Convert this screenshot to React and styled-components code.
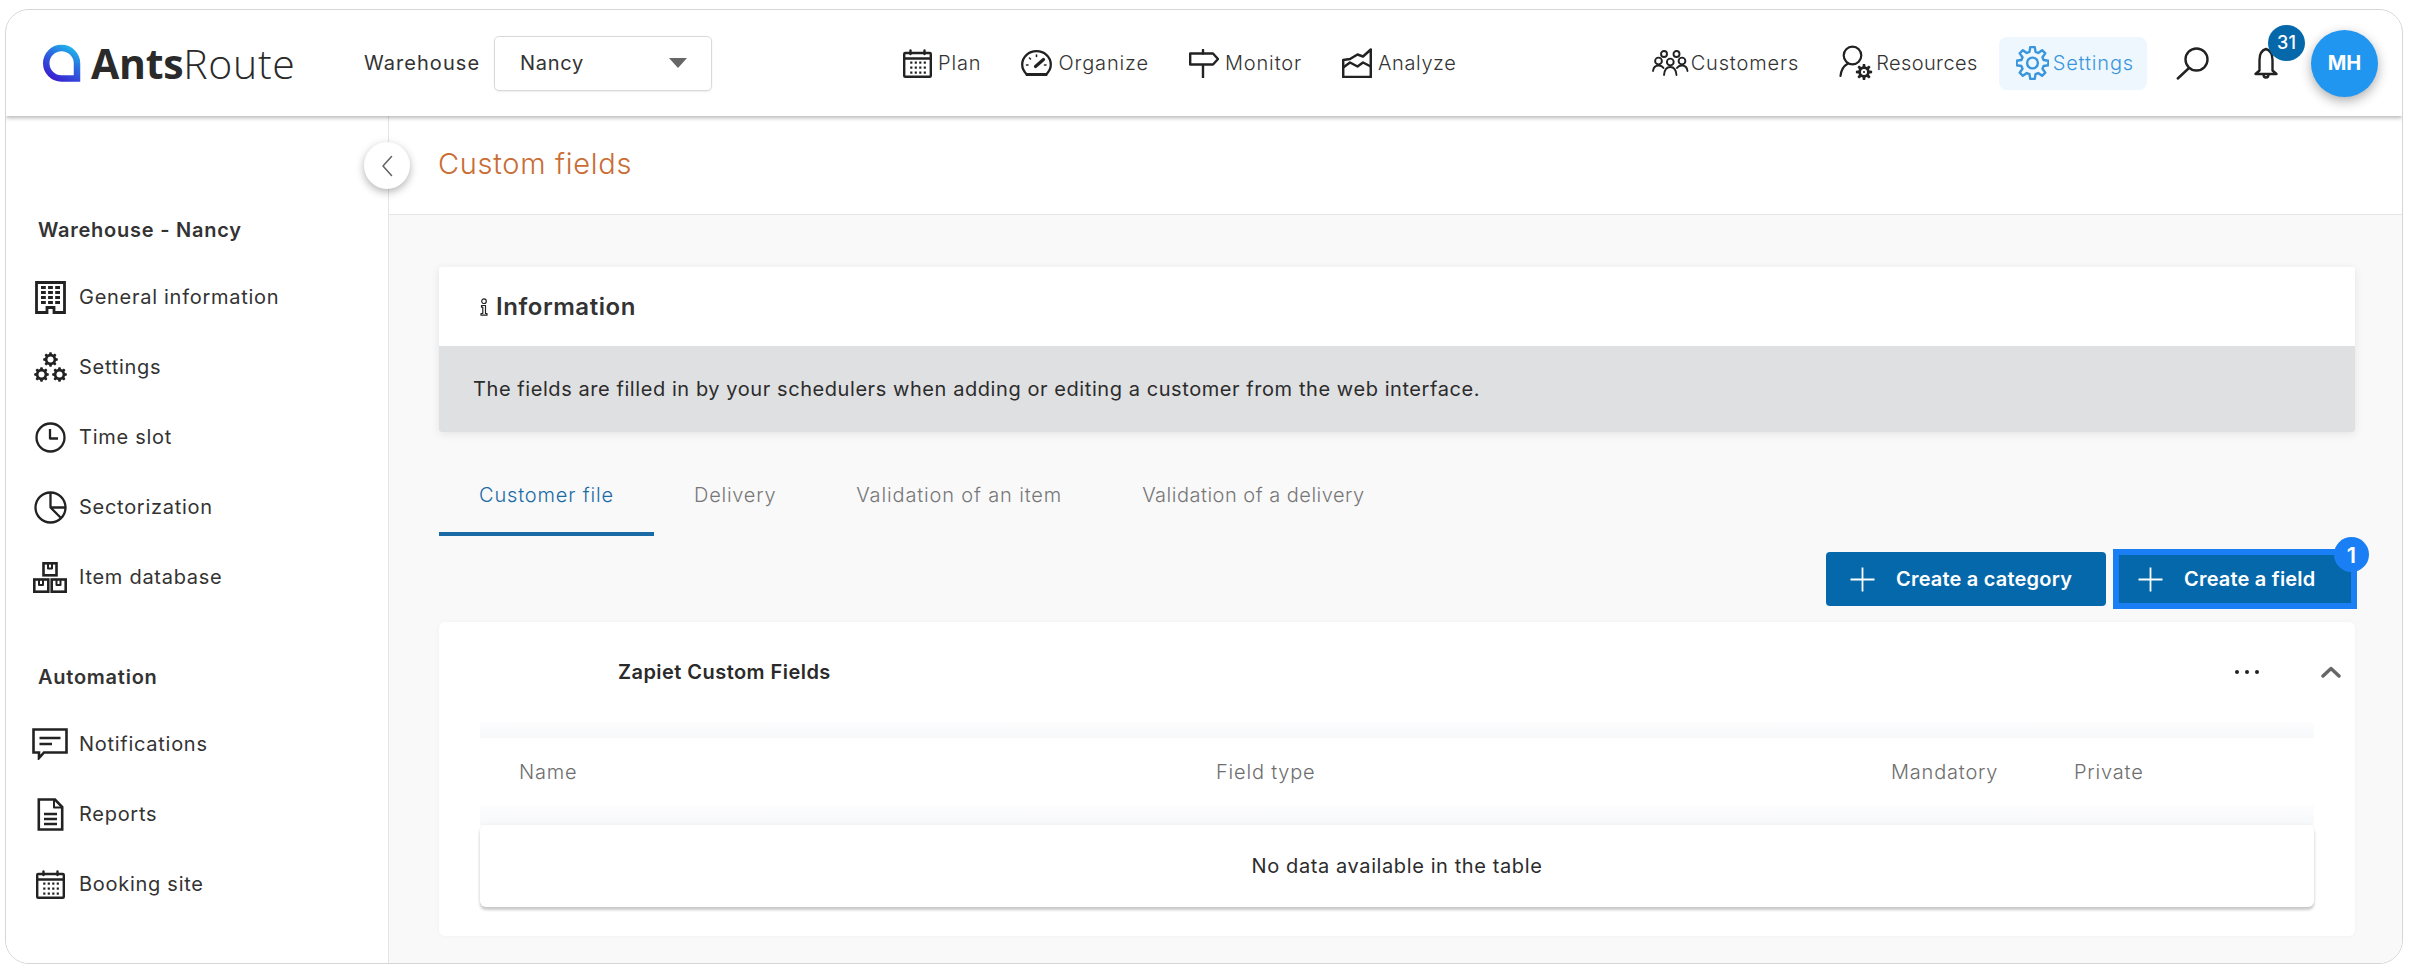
import React from 'react'
import styled, { createGlobalStyle } from 'styled-components'

const GlobalStyle = createGlobalStyle`
    html, body {
        margin: 0;
        padding: 0;
        background: #fff;
        font-family: Inter, "Open Sans", sans-serif;
        color: #333;
    }
    * { box-sizing: border-box; }
`

const Frame = styled.div`
    position: relative;
    width: 2398px;
    height: 955px;
    margin: 9px 0 0 5px;
    border: 1.5px solid #d6d6d6;
    border-radius: 24px;
    overflow: hidden;
    display: flex;
    flex-direction: column;
    background: #fff;
`

const Header = styled.header`
    position: relative;
    z-index: 2;
    flex: 0 0 106px;
    display: flex;
    align-items: center;
    padding: 0 24px 0 36px;
    background: #fff;
    box-shadow: 0 2px 4px rgba(0, 0, 0, 0.28);
`

const Logo = styled.div`
    display: flex;
    align-items: center;
    gap: 9px;
    width: 322px;
`

const LogoText = styled.div`
    font-size: 41px;
    line-height: 1;
    font-family: "Open Sans", sans-serif;
    color: #2a2a2a;
    letter-spacing: 0.7px;
    font-weight: 300;
    b { font-weight: 700; letter-spacing: -0.3px; }
`

const SelectLabel = styled.span`
    font-size: 20px;
    letter-spacing: 1.05px;
    color: #333;
    margin-right: 14px;
`

const SelectBox = styled.div`
    width: 218px;
    height: 55px;
    border: 1.5px solid #d9d9d9;
    border-radius: 5px;
    display: flex;
    align-items: center;
    justify-content: space-between;
    padding: 0 24px 0 25px;
    font-size: 20px;
    letter-spacing: 0.7px;
    color: #333;
    box-shadow: 0 1px 2px rgba(0, 0, 0, 0.08);
`

const Caret = styled.i`
    width: 0;
    height: 0;
    border-left: 9px solid transparent;
    border-right: 9px solid transparent;
    border-top: 10px solid #666;
`

const NavGroup = styled.nav`
    display: flex;
    align-items: center;
    gap: 40px;
    margin-left: ${p => p.$left || 0}px;
`

const NavLink = styled.a`
    display: flex;
    align-items: center;
    gap: ${p => p.$gap || 6}px;
    font-size: 20px;
    font-weight: 300;
    letter-spacing: ${p => p.$ls ?? 0.85}px;
    color: ${p => (p.$active ? '#3a96dc' : '#333')};
    ${p => p.$active && `
        background: #eef7fe;
        border-radius: 8px;
        height: 53px;
        padding: 0 13px 0 17px;
        margin-left: -19px;
    `}
`

const RightGroup = styled.div`
    margin-left: auto;
    display: flex;
    align-items: center;
`

const SearchButton = styled.button`
    all: unset;
    display: flex;
    margin: 0 44px 0 29px;
`

const BellWrap = styled.div`
    position: relative;
    display: flex;
    margin-right: 32px;
`

const CountBadge = styled.span`
    position: absolute;
    top: -22px;
    left: 15px;
    width: 37px;
    height: 36px;
    border-radius: 50%;
    background: #0568ab;
    color: #fff;
    font-size: 18px;
    font-weight: 500;
    display: flex;
    align-items: center;
    justify-content: center;
`

const Avatar = styled.div`
    width: 67px;
    height: 67px;
    border-radius: 50%;
    background: #2196f0;
    color: #fff;
    font-size: 20px;
    font-weight: 700;
    display: flex;
    align-items: center;
    justify-content: center;
    box-shadow: 0 4px 12px rgba(0, 0, 0, 0.32);
`

const Body = styled.div`
    flex: 1;
    min-height: 0;
    display: flex;
    position: relative;
`

const CollapseButton = styled.button`
    all: unset;
    position: absolute;
    z-index: 3;
    left: 358px;
    top: 26px;
    width: 46px;
    height: 47px;
    border-radius: 50%;
    background: #fff;
    box-shadow: 0 3px 8px rgba(0, 0, 0, 0.3);
    display: flex;
    align-items: center;
    justify-content: center;
`

const Sidebar = styled.aside`
    flex: 0 0 383px;
    padding-top: 99px;
    border-right: 1.5px solid #e4e4e4;
    background: #fff;
`

const SideTitle = styled.h3`
    margin: ${p => (p.$spaced ? '50px' : '0')} 0 17px;
    padding-left: 32px;
    height: 30px;
    line-height: 30px;
    font-size: 20px;
    font-weight: 600;
    letter-spacing: 0.75px;
    color: #333;
`

const SideItem = styled.a`
    display: flex;
    align-items: center;
    gap: 11px;
    height: 70px;
    padding-left: 26px;
    font-size: 20px;
    font-weight: 400;
    letter-spacing: 0.72px;
    color: #333;
`

const IconSlot = styled.span`
    flex: 0 0 36px;
    display: flex;
    justify-content: center;
`

const Main = styled.main`
    flex: 1;
    min-width: 0;
    background: #f9f9fa;
`

const TitleBand = styled.div`
    height: 99px;
    padding-left: 49px;
    display: flex;
    align-items: center;
    padding-bottom: 4px;
    background: #fff;
    border-bottom: 1.5px solid #e5e5e5;
`

const PageTitle = styled.h1`
    margin: 0;
    font-size: 29px;
    font-weight: 300;
    letter-spacing: 0.7px;
    color: #c96d35;
`

const Content = styled.div`
    padding: 52px 47px 0 50px;
`

const InfoCard = styled.section`
    border-radius: 3px;
    overflow: hidden;
    box-shadow: 0 2px 10px rgba(0, 0, 0, 0.09);
`

const InfoHead = styled.div`
    height: 79px;
    padding-left: 41px;
    display: flex;
    align-items: center;
    gap: 8px;
    background: #fff;
    font-size: 24px;
    font-weight: 600;
    letter-spacing: 0.55px;
    color: #333;
`

const InfoBody = styled.div`
    height: 86px;
    padding-left: 34px;
    display: flex;
    align-items: center;
    background: #dfe0e2;
    font-size: 20px;
    letter-spacing: 0.57px;
    color: #2c2c2c;
`

const Tabs = styled.div`
    display: flex;
    margin-top: 30px;
`

const Tab = styled.div`
    height: 74px;
    padding: 0 40px 4px 40px;
    display: flex;
    align-items: center;
    border-bottom: 4px solid ${p => (p.$active ? '#1a6ba5' : 'transparent')};
    color: ${p => (p.$active ? '#1a6ba5' : '#777')};
    font-size: 20px;
    font-weight: 300;
    letter-spacing: ${p => p.$ls}px;
`

const Actions = styled.div`
    display: flex;
    justify-content: flex-end;
    align-items: center;
    gap: 7px;
    margin: 13px -2px 0 0;
`

const ActionButton = styled.button`
    all: unset;
    box-sizing: border-box;
    position: relative;
    display: flex;
    align-items: center;
    gap: 21px;
    width: ${p => (p.$focused ? 244 : 280)}px;
    height: ${p => (p.$focused ? 60 : 54)}px;
    padding-left: ${p => (p.$focused ? 19 : 24)}px;
    background: #0568ab;
    border: ${p => (p.$focused ? '6px solid #1a7ff5' : 'none')};
    border-radius: ${p => (p.$focused ? 0 : 4)}px;
    color: #fff;
    font-size: 20px;
    font-weight: 600;
    letter-spacing: 0.2px;
`

const StepBadge = styled.span`
    position: absolute;
    top: -18px;
    right: -18px;
    width: 35px;
    height: 35px;
    border-radius: 50%;
    background: #1a7ff5;
    font-size: 22px;
    font-weight: 600;
    display: flex;
    align-items: center;
    justify-content: center;
`

const Card = styled.section`
    margin-top: 13px;
    height: 314px;
    border-radius: 6px;
    background: #fff;
    box-shadow: 0 0 5px rgba(0, 0, 0, 0.04);
`

const CardHead = styled.div`
    height: 100px;
    display: flex;
    align-items: center;
    padding: 0 14px 0 179px;
`

const CardTitle = styled.h2`
    margin: 0;
    font-size: 20px;
    font-weight: 600;
    letter-spacing: 0.45px;
    color: #2a2a2a;
`

const MoreDots = styled.span`
    margin-left: auto;
    display: flex;
    gap: 6px;
    margin-right: 62px;
    i {
        width: 4px;
        height: 4px;
        border-radius: 50%;
        background: #222;
    }
`

const Table = styled.div`
    margin: 0 41px;
`

const Strip = styled.div`
    height: ${p => p.$h}px;
    background: linear-gradient(#fdfdfe, #f7f8fa);
`

const HeadRow = styled.div`
    height: 67px;
    padding-left: 39px;
    display: grid;
    grid-template-columns: 697px 675px 183px 1fr;
    align-items: center;
    color: #6e6e6e;
    font-size: 20px;
    font-weight: 300;
    letter-spacing: 0.8px;
`

const EmptyRow = styled.div`
    height: 82px;
    display: flex;
    align-items: center;
    justify-content: center;
    border-radius: 6px;
    background: #fff;
    box-shadow: 0 3px 3px rgba(0, 0, 0, 0.2), 0 0 4px rgba(0, 0, 0, 0.05);
    color: #2c2c2c;
    font-size: 20px;
    letter-spacing: 0.6px;
`

const Svg = ({ w, h, color = '#222', sw = 2.4, children }) => (
    <svg width={w} height={h} viewBox={`0 0 ${w} ${h}`} fill="none" stroke={color} strokeWidth={sw} strokeLinecap="round" strokeLinejoin="round">
        {children}
    </svg>
)

// builds a toothed wheel outline
const gearPath = (cx, cy, outer, inner, teeth) => {
    const step = (Math.PI * 2) / teeth
    const pts = []
    for (let i = 0; i < teeth; i++) {
        const a = i * step - Math.PI / 2
        const at = (r, d) => `${(cx + r * Math.cos(a + d * step)).toFixed(2)} ${(cy + r * Math.sin(a + d * step)).toFixed(2)}`
        pts.push(at(inner, -0.34), at(outer, -0.18), at(outer, 0.18), at(inner, 0.34))
    }
    return `M${pts.join(' L')} Z`
}

const LogoMark = () => (
    <svg width="40" height="39" viewBox="0 0 40 39" fill="none">
        <defs>
            <linearGradient id="logoGrad" x1="0.2" y1="1" x2="0.8" y2="0">
                <stop offset="0" stopColor="#3a20d0" />
                <stop offset="0.6" stopColor="#2a6be0" />
                <stop offset="1" stopColor="#1fb0ea" />
            </linearGradient>
        </defs>
        <path d="M19.5 4a15.5 15.5 0 0 1 15.5 15.5V34.5H19.5a15.2 15.2 0 0 1 0-30.5z" stroke="url(#logoGrad)" strokeWidth="6.5" />
    </svg>
)

const CalendarIcon = ({ w = 29, h = 29 }) => (
    <Svg w={w} h={h} sw={2.4}>
        <rect x="1.2" y="4" width={w - 2.4} height={h - 5.2} rx="1" />
        <path d={`M1.2 9.5H${w - 1.2}M7.5 1.5V5M${w - 7.5} 1.5V5`} />
        {[13.5, 18.5, 23.5].map(y => [7.5, 12, 16.5, 21].map(x => (
            <rect key={`${x}-${y}`} x={x * (w / 29) - 0.3} y={y * (h / 29) - 1} width="2.2" height="2.2" fill="#222" stroke="none" />
        )))}
    </Svg>
)

const GaugeIcon = () => (
    <Svg w={31} h={26} sw={2.3}>
        <path d="M6 24.5C3 21.8 1.2 18.2 1.2 14.5 1.2 7 7.5 1.2 15.5 1.2S29.8 7 29.8 14.5c0 3.7-1.8 7.3-4.8 10z" />
        <path d="M6 24.5H25" strokeWidth="3.2" />
        <path d="M14.5 16.5L22.5 9.5" strokeWidth="3.2" />
        <path d="M15.5 5V6.5M8.5 8L9.5 9M5.5 15H7M25 15H23.5" strokeWidth="1.6" />
    </Svg>
)

const SignIcon = () => (
    <Svg w={30} h={29} sw={2.4}>
        <path d="M14 1V4.5M14 16V28.5" />
        <path d="M1.2 4.5H24L29 10 24 15.5H1.2z" />
    </Svg>
)

const ChartIcon = () => (
    <Svg w={30} h={30} sw={2.5}>
        <path d="M1.2 12V29H28.8V1.5L21 8.5 15.5 6.5 8 11z" />
        <path d="M1.2 19.5L8 14.5 15.5 18.5 21 14.5 28.8 18.5" />
    </Svg>
)

const PeopleIcon = () => (
    <Svg w={37} h={26} sw={1.9}>
        <circle cx="12" cy="4" r="3" />
        <circle cx="24.5" cy="4" r="3" />
        <circle cx="6.5" cy="11" r="3.4" />
        <circle cx="18.3" cy="12" r="3.4" />
        <circle cx="30" cy="11" r="3.4" />
        <path d="M1 21C1.5 17 3.5 15.5 6.5 15.5 9 15.5 10.5 16.5 11.5 18M25 18C26 16.5 27.5 15.5 30 15.5 33 15.5 35 17 35.5 21" />
        <path d="M12 25C12.5 19.5 15 17 18.3 17S24 19.5 24.5 25" />
    </Svg>
)

const ResourceIcon = () => (
    <Svg w={35} h={36} sw={2.2}>
        <circle cx="13.5" cy="10.5" r="8.8" />
        <path d="M9 18.5C4.5 21 2 25.5 1.5 31" />
        <path d={gearPath(25, 27, 8.2, 5.8, 8)} fill="#222" stroke="none" />
        <circle cx="25" cy="27" r="3" fill="#fff" stroke="none" />
        <circle cx="25" cy="27" r="1.1" fill="#222" stroke="none" />
    </Svg>
)

const GearIcon = () => (
    <Svg w={33} h={34} color="#3a96dc" sw={2.4}>
        <path d={gearPath(16.5, 17, 16, 11.5, 8)} />
        <circle cx="16.5" cy="17" r="5.4" />
    </Svg>
)

const SearchIcon = () => (
    <Svg w={33} h={33} sw={2.4}>
        <circle cx="20.5" cy="12.5" r="11" />
        <path d="M13 21L1.8 31.5" />
    </Svg>
)

const BellIcon = () => (
    <Svg w={26} h={33} sw={2.4}>
        <path d="M13 2C8 3.5 6.5 8 6.5 13V23.5L2.5 27H23.5L19.5 23.5V13C19.5 8 18 3.5 13 2z" />
        <path d="M10.5 27.5C10.5 31.5 15.5 31.5 15.5 27.5" />
    </Svg>
)

const BuildingIcon = () => (
    <Svg w={31} h={33} sw={2.8}>
        <path d="M1.5 1.5H29.5V31.5H19V26.5H12V31.5H1.5z" strokeLinejoin="miter" />
        {[6.5, 11.5, 16.5, 21.5].map(y => <path key={y} d={`M6 ${y}H25`} strokeWidth="2.8" strokeDasharray="4.8 2.3" strokeLinecap="butt" />)}
    </Svg>
)

const GearsIcon = () => (
    <svg width="33" height="30" viewBox="0 0 33 30">
        {[[16.5, 7.5], [7.5, 22.5], [25.5, 22.5]].map(([x, y]) => (
            <g key={x}>
                <path d={gearPath(x, y, 7.4, 5.7, 8)} fill="#222" />
                <circle cx={x} cy={y} r="3" fill="#fff" />
            </g>
        ))}
    </svg>
)

const ClockIcon = () => (
    <Svg w={31} h={31} sw={2.3}>
        <circle cx="15.5" cy="15.5" r="14" />
        <path d="M15 7V16.5H23" strokeLinecap="butt" />
    </Svg>
)

const PieIcon = () => (
    <Svg w={33} h={33} sw={2.3}>
        <circle cx="16.5" cy="16.5" r="15" />
        <path d="M16.5 1.5V16.5H31.5M16.5 16.5L27 27" strokeLinecap="butt" />
    </Svg>
)

const BoxesIcon = () => (
    <Svg w={34} h={31} sw={2.6}>
        <rect x="10.5" y="1.3" width="13" height="12" strokeLinejoin="miter" />
        <rect x="1.3" y="17.5" width="14" height="12.2" strokeLinejoin="miter" />
        <rect x="18.7" y="17.5" width="14" height="12.2" strokeLinejoin="miter" />
        <path d="M15 2V6.5H19V2M6 18V23H10V18M23.5 18V23H27.5V18" strokeWidth="2" strokeLinecap="butt" />
    </Svg>
)

const ChatIcon = () => (
    <Svg w={36} h={32} sw={2.6}>
        <path d="M1.5 1.5H34.5V24.5H12L7 30V24.5H1.5z" strokeLinejoin="miter" />
        <path d="M7.5 10H28.5M7.5 16H20" strokeLinecap="butt" />
    </Svg>
)

const DocIcon = () => (
    <Svg w={27} h={33} sw={2.6}>
        <path d="M1.8 1.5H18L25.2 9V31.5H1.8z" strokeLinejoin="miter" />
        <path d="M17 2V9.5H25" strokeWidth="2" />
        <path d="M7 16H20M7 21H20M7 26H20" strokeLinecap="butt" />
    </Svg>
)

const InfoGlyph = () => (
    <Svg w={8} h={18} sw={1.2}>
        <circle cx="4" cy="3.2" r="2.3" />
        <path d="M1.5 7.5H5.5V15.5H7V17.2H1V15.5H2.8V9.2H1.5z" />
    </Svg>
)

const PlusIcon = () => (
    <Svg w={25} h={25} color="#fff" sw={1.8}>
        <path d="M12.5 0.5V24.5M0.5 12.5H24.5" strokeLinecap="butt" />
    </Svg>
)

const ChevronLeft = () => (
    <Svg w={12} h={22} color="#666" sw={1.6}>
        <path d="M10.5 1.5L2 11l8.5 9.5" />
    </Svg>
)

const ChevronUp = () => (
    <Svg w={20} h={12} color="#666" sw={3.4}>
        <path d="M2 10L10 2.5 18 10" />
    </Svg>
)

const sideGroups = [
    {
        title: 'Warehouse - Nancy',
        items: [
            ['General information', BuildingIcon],
            ['Settings', GearsIcon],
            ['Time slot', ClockIcon],
            ['Sectorization', PieIcon],
            ['Item database', BoxesIcon],
        ],
    },
    {
        title: 'Automation',
        items: [
            ['Notifications', ChatIcon],
            ['Reports', DocIcon],
            ['Booking site', CalendarIcon],
        ],
    },
]

const mainNav = [['Plan', CalendarIcon], ['Organize', GaugeIcon], ['Monitor', SignIcon], ['Analyze', ChartIcon]]
const tabs = [['Customer file', 0.85], ['Delivery', 0.75], ['Validation of an item', 0.85], ['Validation of a delivery', 0.5]]

const App = () => {
    return (
        <Frame>
            <GlobalStyle />
            <Header>
                <Logo>
                    <LogoMark />
                    <LogoText><b>Ants</b>Route</LogoText>
                </Logo>
                <SelectLabel>Warehouse</SelectLabel>
                <SelectBox>Nancy<Caret /></SelectBox>
                <NavGroup $left={191}>
                    {mainNav.map(([label, Icon]) => (
                        <NavLink key={label} $ls={label === 'Analyze' ? 0.6 : 0.85}><Icon />{label}</NavLink>
                    ))}
                </NavGroup>
                <RightGroup>
                    <NavGroup>
                        <NavLink $gap={2}><PeopleIcon />Customers</NavLink>
                        <NavLink $gap={2} $ls={0.4}><ResourceIcon />Resources</NavLink>
                        <NavLink $active $gap={4}><GearIcon />Settings</NavLink>
                    </NavGroup>
                    <SearchButton><SearchIcon /></SearchButton>
                    <BellWrap>
                        <BellIcon />
                        <CountBadge>31</CountBadge>
                    </BellWrap>
                    <Avatar>MH</Avatar>
                </RightGroup>
            </Header>
            <Body>
                <CollapseButton><ChevronLeft /></CollapseButton>
                <Sidebar>
                    {sideGroups.map((group, i) => (
                        <div key={group.title}>
                            <SideTitle $spaced={i > 0}>{group.title}</SideTitle>
                            {group.items.map(([label, Icon]) => (
                                <SideItem key={label}>
                                    <IconSlot><Icon /></IconSlot>
                                    {label}
                                </SideItem>
                            ))}
                        </div>
                    ))}
                </Sidebar>
                <Main>
                    <TitleBand><PageTitle>Custom fields</PageTitle></TitleBand>
                    <Content>
                        <InfoCard>
                            <InfoHead><InfoGlyph />Information</InfoHead>
                            <InfoBody>The fields are filled in by your schedulers when adding or editing a customer from the web interface.</InfoBody>
                        </InfoCard>
                        <Tabs>
                            {tabs.map(([t, ls], i) => <Tab key={t} $active={i === 0} $ls={ls}>{t}</Tab>)}
                        </Tabs>
                        <Actions>
                            <ActionButton><PlusIcon />Create a category</ActionButton>
                            <ActionButton $focused>
                                <PlusIcon />Create a field
                                <StepBadge>1</StepBadge>
                            </ActionButton>
                        </Actions>
                        <Card>
                            <CardHead>
                                <CardTitle>Zapiet Custom Fields</CardTitle>
                                <MoreDots><i /><i /><i /></MoreDots>
                                <ChevronUp />
                            </CardHead>
                            <Table>
                                <Strip $h={16} />
                                <HeadRow>
                                    <span>Name</span>
                                    <span>Field type</span>
                                    <span>Mandatory</span>
                                    <span>Private</span>
                                </HeadRow>
                                <Strip $h={20} />
                                <EmptyRow>No data available in the table</EmptyRow>
                            </Table>
                        </Card>
                    </Content>
                </Main>
            </Body>
        </Frame>
    )
}

export default App
